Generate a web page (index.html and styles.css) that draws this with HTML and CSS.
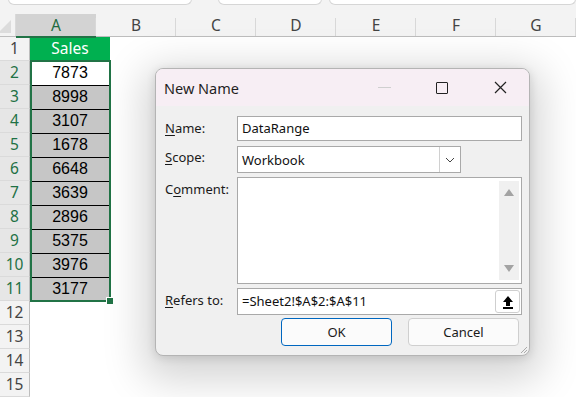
FILE: index.html
```html
<!DOCTYPE html>
<html>
<head>
<meta charset="utf-8">
<link rel="stylesheet" href="styles.css">
</head>
<body>
<div class="app">
  <div class="topstrip">
    <div class="tbox tbox1"></div>
    <div class="tbox tbox2"></div>
    <div class="tbox tbox3"></div>
  </div>
  <div class="sheet">
    <div class="colheads">
      <div class="corner"><span class="tri"></span></div>
      <div class="ch ch-sel">A</div>
      <div class="ch">B</div>
      <div class="ch">C</div>
      <div class="ch">D</div>
      <div class="ch">E</div>
      <div class="ch">F</div>
      <div class="ch">G</div>
    </div>
    <div class="row"><div class="rh">1</div><div class="cell head">Sales</div></div>
    <div class="row"><div class="rh rh-sel">2</div><div class="cell first">7873</div></div>
    <div class="row"><div class="rh rh-sel">3</div><div class="cell g">8998</div></div>
    <div class="row"><div class="rh rh-sel">4</div><div class="cell g">3107</div></div>
    <div class="row"><div class="rh rh-sel">5</div><div class="cell g">1678</div></div>
    <div class="row"><div class="rh rh-sel">6</div><div class="cell g">6648</div></div>
    <div class="row"><div class="rh rh-sel">7</div><div class="cell g">3639</div></div>
    <div class="row"><div class="rh rh-sel">8</div><div class="cell g">2896</div></div>
    <div class="row"><div class="rh rh-sel">9</div><div class="cell g">5375</div></div>
    <div class="row"><div class="rh rh-sel">10</div><div class="cell g">3976</div></div>
    <div class="row"><div class="rh rh-sel">11</div><div class="cell g">3177</div></div>
    <div class="row"><div class="rh">12</div><div class="cell"></div></div>
    <div class="row"><div class="rh">13</div><div class="cell"></div></div>
    <div class="row"><div class="rh">14</div><div class="cell"></div></div>
    <div class="row"><div class="rh">15</div><div class="cell"></div></div>
    <div class="selection"></div>
    <div class="handle"></div>
  </div>

  <div class="dialog">
    <div class="titlebar">
      <div class="title">New Name</div>
      <div class="tbtns">
        <div class="tb tb-min"><span class="minline"></span></div>
        <div class="tb"><span class="maxbox"></span></div>
        <div class="tb">
          <svg width="13" height="13" viewBox="0 0 13 13"><path d="M1 1 L12 12 M12 1 L1 12" stroke="#222" stroke-width="1.2" fill="none"/></svg>
        </div>
      </div>
    </div>
    <div class="dbody">
      <div class="form">
        <label class="lbl"><u>N</u>ame:</label>
        <div class="input r-name">DataRange</div>

        <label class="lbl"><u>S</u>cope:</label>
        <div class="select r-scope">
          <span class="selval">Workbook</span>
          <span class="drop">
            <svg width="10" height="6" viewBox="0 0 10 6"><path d="M1 1 L5 5 L9 1" stroke="#444" stroke-width="1" fill="none"/></svg>
          </span>
        </div>

        <label class="lbl">C<u>o</u>mment:</label>
        <div class="textarea r-comment">
          <div class="scroll">
            <span class="arr up"></span>
            <span class="arr down"></span>
          </div>
        </div>

        <label class="lbl"><u>R</u>efers to:</label>
        <div class="input refers r-refers">
          <span>=Sheet2!$A$2:$A$11</span>
          <span class="upbtn">
            <svg width="12" height="14" viewBox="0 0 12 14"><path d="M6 1 L11 7 L8 7 L8 11 L4 11 L4 7 L1 7 Z" fill="#000"/><rect x="1" y="12" width="10" height="2" fill="#000"/></svg>
          </span>
        </div>
      </div>
      <div class="buttons">
        <div class="btn btn-ok">OK</div>
        <div class="btn">Cancel</div>
      </div>
    </div>
    <svg class="grip" width="10" height="10" viewBox="0 0 10 10"><path d="M9 3 L3 9 M9 6 L6 9" stroke="#aaa" stroke-width="1"/></svg>
  </div>
</div>
</body>
</html>
```
FILE: styles.css
```css
* { box-sizing: border-box; }
html, body { margin: 0; padding: 0; }
body {
  width: 576px;
  height: 397px;
  overflow: hidden;
  background: #fff;
  font-family: "Noto Sans", "Open Sans", sans-serif;
}
.app { position: relative; width: 576px; height: 397px; }

.topstrip {
  height: 14px;
  background: #f3f3f3;
  position: relative;
  display: flex;
}
.tbox {
  height: 6px;
  margin-top: -1px;
  background: #fff;
  border: 1px solid #d6d6d6;
  border-top: none;
  border-radius: 0 0 6px 6px;
}
.tbox1 { margin-left: 8px; width: 186px; }
.tbox2 { margin-left: 26px; width: 106px; }
.tbox3 { margin-left: 7px; width: 250px; }

.sheet { position: relative; }
.colheads {
  display: flex;
  height: 23px;
  background: #f3f3f3;
  border-bottom: 1px solid #bdbdbd;
}
.corner {
  width: 30px;
  position: relative;
  border-right: 1px solid #dadada;
}
.tri {
  position: absolute;
  right: 4px;
  bottom: 3px;
  width: 0; height: 0;
  border-left: 13px solid transparent;
  border-bottom: 13px solid #dcdcdc;
}
.ch {
  width: 80px;
  flex: none;
  text-align: center;
  font-size: 15.5px;
  line-height: 23px;
  color: #444;
  position: relative;
}
.ch::after {
  content: "";
  position: absolute;
  right: 0; top: 4px; bottom: 0;
  width: 1px;
  background: #d8d8d8;
}
.ch-sel {
  background: #d3d3d3;
  color: #1e6b40;
  border-bottom: 2px solid #217346;
  height: 24px;
  line-height: 23px;
}

.row { display: flex; height: 24px; }
.rh {
  width: 30px;
  flex: none;
  background: #f3f3f3;
  border-right: 1px solid #bdbdbd;
  border-bottom: 1px solid #dadada;
  font-size: 15.5px;
  line-height: 23px;
  text-align: center;
  color: #444;
}
.rh-sel { background: #e6e6e6; color: #1e7145; }
.cell {
  width: 80px;
  flex: none;
  font-family: "Liberation Sans", Arial, sans-serif;
  font-size: 16px;
  line-height: 24px;
  text-align: center;
  color: #000;
}
.cell.head {
  background: #00b050;
  color: #fff;
  font-family: "Noto Sans", sans-serif;
  font-size: 15.5px;
  line-height: 23px;
}
.cell.first { background: #fff; }
.cell.g {
  background: #c6c6c6;
  border-top: 1px solid #000;
  line-height: 22px;
}
.selection {
  position: absolute;
  left: 30px;
  top: 46px;
  width: 81px;
  height: 242px;
  border: 2px solid #217346;
  pointer-events: none;
}
.handle {
  position: absolute;
  left: 107px;
  top: 284px;
  width: 6px;
  height: 6px;
  background: #217346;
  outline: 1px solid #fff;
}

.dialog {
  position: absolute;
  left: 155px;
  top: 68px;
  width: 375px;
  height: 288px;
  background: #f0f0f0;
  border: 1px solid #b4b4b4;
  border-radius: 8px;
  box-shadow: 0 12px 40px 12px rgba(0,0,0,0.17), 0 2px 10px rgba(0,0,0,0.12);
  overflow: hidden;
}
.titlebar {
  height: 37px;
  background: #f7eef4;
  display: flex;
  align-items: center;
  justify-content: space-between;
}
.title {
  padding-left: 8px;
  font-size: 14.5px;
  color: #1f1f1f;
}
.tbtns { display: flex; }
.tb {
  width: 58px;
  height: 37px;
  display: flex;
  align-items: center;
  justify-content: center;
}
.minline { width: 13px; height: 1px; background: #cfcfcf; }
.maxbox { width: 12px; height: 12px; border: 1.3px solid #222; border-radius: 1px; }

.dbody { padding: 10px 8px 0 8px; }
.form {
  display: grid;
  grid-template-columns: 73px 285px;
  grid-template-rows: 25px 28px 107px 27px;
  row-gap: 4px;
}
.lbl {
  font-size: 13px;
  color: #1a1a1a;
  padding-top: 3px;
  padding-left: 1px;
}
.lbl u { text-decoration-thickness: 1px; text-underline-offset: 2px; }
.input, .select, .textarea {
  background: #fff;
  border: 1px solid #a9a9a9;
  font-size: 13px;
  color: #111;
}
.input {
  padding-left: 4px;
  line-height: 23px;
}
.select {
  width: 224px;
  display: flex;
  align-items: stretch;
  justify-content: space-between;
  margin-top: 1px;
}
.selval { padding-left: 4px; line-height: 26px; }
.drop {
  width: 21px;
  border-left: 1px solid #d0d0d0;
  display: flex;
  align-items: center;
  justify-content: center;
}
.textarea { position: relative; }
.scroll {
  position: absolute;
  right: 2px;
  top: 3px;
  bottom: 3px;
  width: 20px;
  background: #f0f0f0;
}
.arr {
  position: absolute;
  left: 5px;
  width: 0; height: 0;
  border-left: 5px solid transparent;
  border-right: 5px solid transparent;
}
.arr.up { top: 8px; border-bottom: 7px solid #a3a3a3; }
.arr.down { bottom: 8px; border-top: 7px solid #a3a3a3; }
.refers {
  display: flex;
  align-items: center;
  justify-content: space-between;
  padding-right: 1px;
  line-height: 25px;
}
.upbtn {
  width: 25px;
  height: 23px;
  background: #fff;
  border: 1px solid #cfcfcf;
  border-radius: 3px;
  display: flex;
  align-items: center;
  justify-content: center;
}
.buttons {
  display: flex;
  justify-content: flex-end;
  gap: 16px;
  padding-right: 2px;
  margin-top: 3px;
}
.btn {
  width: 111px;
  height: 28px;
  border: 1px solid #cfcfcf;
  border-radius: 4px;
  background: #fbfbfb;
  font-size: 13px;
  color: #1a1a1a;
  text-align: center;
  line-height: 26px;
}
.btn-ok { border-color: #0067c0; }
.grip { position: absolute; right: 1px; bottom: 1px; }
```
